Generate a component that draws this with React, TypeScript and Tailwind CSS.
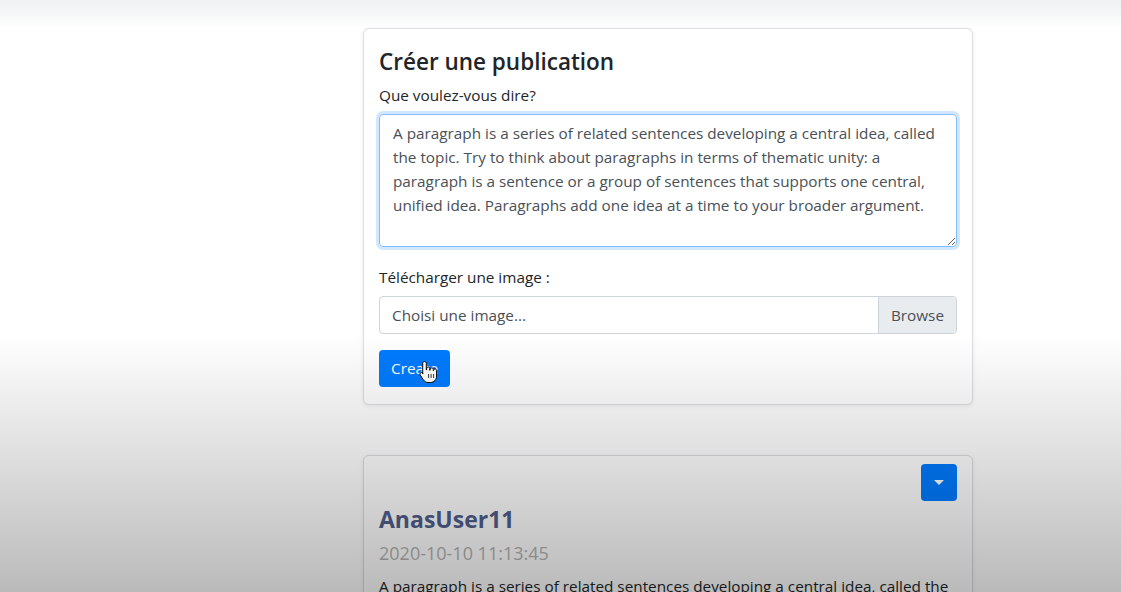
import { useState } from "react";

const texte =
  "A paragraph is a series of related sentences developing a central idea, called the topic. Try to think about paragraphs in terms of thematic unity: a paragraph is a sentence or a group of sentences that supports one central, unified idea. Paragraphs add one idea at a time to your broader argument.";

function HandCursor() {
  return (
    <svg
      width="18"
      height="24"
      viewBox="0 0 18 24"
      className="absolute left-[40px] top-[10px] pointer-events-none"
    >
      <path
        d="M5.5 1.5c1 0 1.8.8 1.8 1.8V10h.3V8.6c0-.9.7-1.6 1.6-1.6s1.6.7 1.6 1.6v1.7h.3V9.5c0-.9.7-1.6 1.6-1.6s1.6.7 1.6 1.6v1.2h.3v-.3c0-.8.7-1.5 1.5-1.5s1.5.7 1.5 1.5V16c0 3.5-2.5 6.5-6 6.5H9c-2 0-3.5-1-4.6-2.6L1.3 15.2c-.6-.9-.3-2 .6-2.5.8-.4 1.7-.2 2.2.5l-.4.6V3.3c0-1 .8-1.8 1.8-1.8z"
        fill="#ffffff"
        stroke="#000000"
        strokeWidth="1"
        strokeLinejoin="round"
      />
      <path d="M9.6 14v4M12.1 14v4M14.6 14v4" stroke="#000000" strokeWidth="0.8" />
    </svg>
  );
}

function CreatePost() {
  const [contenu, setContenu] = useState(texte);
  return (
    <div className="w-[610px] rounded-[6px] border border-[#dcdee2] bg-white px-[15px] pt-[18px] pb-[17px] shadow-[0_1px_4px_rgba(0,0,0,0.08)]">
      <h4 className="text-[22.5px] leading-[29px] font-semibold text-[#212529]">Créer une publication</h4>
      <label className="mt-[7px] block leading-[24px] text-[#212529]">Que voulez-vous dire?</label>
      <textarea
        value={contenu}
        onChange={(e) => setContenu(e.target.value)}
        className="mt-[7px] block h-[133px] w-full resize-y rounded-[4px] border border-[#80bdff] px-[13px] pt-[6px] leading-[24px] text-[#495057] shadow-[0_0_0_3px_rgba(0,123,255,0.18)] outline-none"
      />
      <label className="mt-[18px] block leading-[24px] text-[#212529]">Télécharger une image :</label>
      <div className="mt-[7px] flex h-[38px] overflow-hidden rounded-[4px] border border-[#ced4da] text-[#495057]">
        <span className="flex flex-1 items-center px-[12px]">Choisi une image...</span>
        <span className="flex items-center border-l border-[#ced4da] bg-[#e9ecef] px-[12px]">Browse</span>
      </div>
      <div className="relative mt-[16px] w-fit">
        <button className="h-[37px] rounded-[4px] bg-[#007bff] px-[12px] text-white">Create</button>
        <HandCursor />
      </div>
    </div>
  );
}

function Post() {
  return (
    <div className="w-[610px] rounded-[6px] border border-[#dcdee2] bg-white px-[15px] pt-[8px] pb-6 shadow-[0_1px_4px_rgba(0,0,0,0.08)]">
      <div className="flex justify-end">
        <button className="flex h-[37px] w-[36px] items-center justify-center rounded-[4px] bg-[#007bff]">
          <span className="h-0 w-0 border-x-[5px] border-t-[5px] border-x-transparent border-t-white" />
        </button>
      </div>
      <h4 className="mt-[4px] text-[23px] leading-[29px] font-bold text-[#4f5e8c]">AnasUser11</h4>
      <p className="mt-[7px] text-[18px] leading-[24px] text-[#b4b4b4]">2020-10-10 11:13:45</p>
      <p className="mt-[9px] leading-[24px] text-[#212529]">{texte}</p>
    </div>
  );
}

export default function App() {
  return (
    <div className="relative h-[592px] overflow-hidden bg-white font-['Open_Sans',sans-serif] text-[15.3px]">
      <div className="h-[28px] bg-gradient-to-b from-[#eef0f2] to-white" />
      <div className="ml-[363px] flex flex-col gap-[50px]">
        <CreatePost />
        <Post />
      </div>
      <div className="pointer-events-none absolute inset-x-0 top-[335px] bottom-0 bg-gradient-to-b from-[rgba(0,0,0,0)] to-[rgba(0,0,0,0.27)]" />
    </div>
  );
}
